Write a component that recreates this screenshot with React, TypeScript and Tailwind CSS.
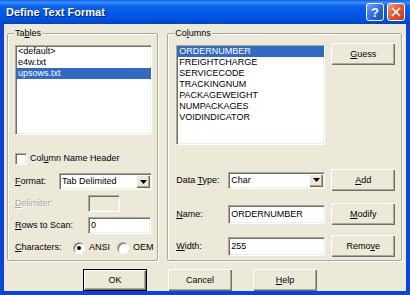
import { X } from 'lucide-react'

const sunken =
    'border border-t-[#aca899] border-l-[#aca899] border-r-white border-b-white shadow-[inset_1px_1px_0_#716f64,inset_-1px_-1px_0_#f1efe2]'
const raised =
    'bg-[#ece9d8] shadow-[inset_1px_1px_0_#fff,inset_-1px_-1px_0_#716f64,inset_-2px_-2px_0_#aca899]'

const tables = ['<default>', 'e4w.txt', 'upsows.txt']
const columns = [
    'ORDERNUMBER',
    'FREIGHTCHARGE',
    'SERVICECODE',
    'TRACKINGNUM',
    'PACKAGEWEIGHT',
    'NUMPACKAGES',
    'VOIDINDICATOR',
]

function Button({ children, isDefault = false, className = '' }: { children: React.ReactNode; isDefault?: boolean; className?: string }) {
    return (
        <div
            className={`w-[64px] h-[22px] flex items-center justify-center ${
                isDefault
                    ? 'border border-black bg-[#ece9d8] shadow-[inset_1px_1px_0_#fff,inset_-1px_-1px_0_#716f64,inset_-2px_-2px_0_#aca899]'
                    : raised
            } ${className}`}
        >
            <span>{children}</span>
        </div>
    )
}

function Select({ value, width }: { value: string; width: string }) {
    return (
        <div className={`${width} h-[17px] bg-white flex items-center ${sunken}`}>
            <span className="flex-1 pl-[2px] leading-[13px]">{value}</span>
            <div className={`w-[14px] h-[13px] mr-[1px] flex items-center justify-center ${raised}`}>
                <svg width="7" height="4" viewBox="0 0 7 4">
                    <path d="M0 0h7L3.5 4z" fill="#000" />
                </svg>
            </div>
        </div>
    )
}

function Radio({ checked, label }: { checked: boolean; label: string }) {
    return (
        <div className="flex items-center gap-[4px]">
            <div className="w-[12px] h-[12px] rounded-full bg-white border border-t-[#aca899] border-l-[#aca899] border-r-white border-b-white shadow-[inset_1px_1px_0_#716f64] flex items-center justify-center">
                {checked && <div className="w-[4px] h-[4px] rounded-full bg-black" />}
            </div>
            <span>{label}</span>
        </div>
    )
}

export default function App() {
    return (
        <div className="w-[410px] h-[295px] flex flex-col font-['Liberation_Sans',Arial,sans-serif] text-[9px] leading-[11px] text-black">
            {/* Title bar */}
            <div className="h-[24px] flex items-center pl-[6px] pr-[5px] bg-[linear-gradient(180deg,#0a5ef0_0%,#3d8ffb_10%,#0d62ec_25%,#0058e6_55%,#0052df_80%,#0042c9_100%)]">
                <span className="flex-1 text-[11px] font-bold text-white [text-shadow:1px_1px_0_#0a1c7a]">
                    Define Text Format
                </span>
                <div className="flex gap-[3px]">
                    <div className="w-[18px] h-[18px] rounded-[3px] border border-white bg-[linear-gradient(135deg,#6fa5fb,#2463e0_60%,#1d4fd0)] flex items-center justify-center text-white text-[13px] font-bold leading-none">
                        ?
                    </div>
                    <div className="w-[18px] h-[18px] rounded-[3px] border border-white bg-[linear-gradient(135deg,#f09a7c,#e0512a_55%,#c8381a)] flex items-center justify-center text-white">
                        <X size={14} strokeWidth={3} />
                    </div>
                </div>
            </div>

            {/* Body */}
            <div className="flex-1 bg-[#ece9d8] border-x-4 border-b-4 border-[#0a45d6] flex flex-col pt-[3px] pl-[3px] pr-[4px]">
                <div className="flex gap-[9px]">
                    {/* Tables group */}
                    <fieldset className="w-[152px] h-[234px] border border-[#aca899] rounded-[2px] shadow-[inset_1px_1px_0_#fff,1px_1px_0_#fff]">
                        <legend className="ml-[6px] px-[1px] leading-[13px] bg-[#ece9d8]">
                            Ta<u>b</u>les
                        </legend>
                        <div className="pl-[7px] flex flex-col">
                            <div className={`mt-[5px] w-[137px] h-[90px] bg-white ${sunken}`}>
                                {tables.map((t, i) => (
                                    <div
                                        key={t}
                                        className={`h-[11px] pl-[2px] ${i === 2 ? 'bg-[#316ac5] text-white' : ''}`}
                                    >
                                        {t}
                                    </div>
                                ))}
                            </div>

                            <div className="mt-[17px] h-[13px] flex items-center gap-[3px]">
                                <div className={`w-[12px] h-[12px] bg-white ${sunken}`} />
                                <span>
                                    Col<u>u</u>mn Name Header
                                </span>
                            </div>

                            <div className="mt-[8px] flex items-center">
                                <span className="w-[44px]">
                                    <u>F</u>ormat:
                                </span>
                                <Select value="Tab Delimited" width="w-[93px]" />
                            </div>

                            <div className="mt-[5px] flex items-center">
                                <span className="w-[73px] text-[#aca899] [text-shadow:1px_1px_0_#fff]">
                                    <u>D</u>elimiter:
                                </span>
                                <div className={`w-[32px] h-[17px] ${sunken}`} />
                            </div>

                            <div className="mt-[5px] flex items-center">
                                <span className="w-[73px]">
                                    <u>R</u>ows to Scan:
                                </span>
                                <div className={`w-[63px] h-[17px] bg-white pl-[2px] flex items-center ${sunken}`}>0</div>
                            </div>

                            <div className="mt-[7px] h-[13px] flex items-center">
                                <span className="w-[58px]">
                                    <u>C</u>haracters:
                                </span>
                                <div className="w-[44px]">
                                    <Radio checked label="ANSI" />
                                </div>
                                <Radio checked={false} label="OEM" />
                            </div>
                        </div>
                    </fieldset>

                    {/* Columns group */}
                    <fieldset className="w-[236px] h-[234px] border border-[#aca899] rounded-[2px] shadow-[inset_1px_1px_0_#fff,1px_1px_0_#fff]">
                        <legend className="ml-[6px] px-[1px] leading-[13px] bg-[#ece9d8]">
                            Co<u>l</u>umns
                        </legend>
                        <div className="pl-[8px] flex flex-col">
                            <div className="mt-[5px] flex items-start">
                                <div className={`w-[149px] h-[100px] bg-white ${sunken}`}>
                                    {columns.map((c, i) => (
                                        <div
                                            key={c}
                                            className={`h-[11px] pl-[2px] ${i === 0 ? 'bg-[#316ac5] text-white' : ''}`}
                                        >
                                            {c}
                                        </div>
                                    ))}
                                </div>
                                <Button className="ml-[6px] -mt-[2px]">
                                    <u>G</u>uess
                                </Button>
                            </div>

                            <div className="mt-[24px] flex items-center">
                                <span className="w-[52px]">
                                    Data <u>T</u>ype:
                                </span>
                                <Select value="Char" width="w-[97px]" />
                                <Button className="ml-[6px]">
                                    <u>A</u>dd
                                </Button>
                            </div>

                            <div className="mt-[12px] flex items-center">
                                <span className="w-[52px]">
                                    <u>N</u>ame:
                                </span>
                                <div className={`w-[97px] h-[19px] bg-white pl-[2px] flex items-center ${sunken}`}>
                                    ORDERNUMBER
                                </div>
                                <Button className="ml-[6px]">
                                    <u>M</u>odify
                                </Button>
                            </div>

                            <div className="mt-[10px] flex items-center">
                                <span className="w-[52px]">
                                    <u>W</u>idth:
                                </span>
                                <div className={`w-[97px] h-[19px] bg-white pl-[2px] flex items-center ${sunken}`}>
                                    255
                                </div>
                                <Button className="ml-[6px]">
                                    Remo<u>v</u>e
                                </Button>
                            </div>
                        </div>
                    </fieldset>
                </div>

                {/* Dialog buttons */}
                <div className="mt-[8px] flex gap-[21px] pl-[76px]">
                    <Button isDefault>OK</Button>
                    <Button>Cancel</Button>
                    <Button>
                        <u>H</u>elp
                    </Button>
                </div>
            </div>
        </div>
    )
}
